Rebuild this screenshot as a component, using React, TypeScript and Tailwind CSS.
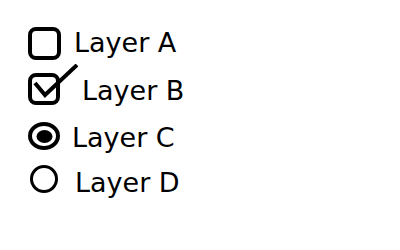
import React from 'react';

const font = { fontFamily: '"DejaVu Sans", Verdana, sans-serif' };

const Label = ({ text, className }: { text: string; className: string }) => (
  <span className={`text-[27px] leading-[27px] text-black whitespace-nowrap ${className}`} style={font}>
    {text}
  </span>
);

const App = () => {
  return (
    <div className="w-[400px] h-[250px] bg-white pt-[27px] pl-[28px] flex flex-col">
      {/* Layer A: empty checkbox */}
      <div className="flex items-start h-[37px]">
        <svg width="33" height="33" viewBox="0 0 33 33" className="shrink-0">
          <rect x="2" y="2" width="29" height="29" rx="6" fill="none" stroke="black" strokeWidth="4" />
        </svg>
        <Label text="Layer A" className="ml-[13px] mt-[2px]" />
      </div>

      {/* Layer B: checked checkbox */}
      <div className="flex items-start h-[42px]">
        <svg width="50" height="42" viewBox="0 0 50 42" className="shrink-0">
          <rect x="2" y="11" width="28" height="28" rx="6" fill="none" stroke="black" strokeWidth="4" />
          <path d="M7 19 L17 31 L49 1" fill="none" stroke="black" strokeWidth="4" strokeLinejoin="miter" />
        </svg>
        <Label text="Layer B" className="ml-[4px] mt-[13px]" />
      </div>

      {/* Layer C: selected radio */}
      <div className="flex items-start mt-[16px] h-[28px]">
        <svg width="32" height="28" viewBox="0 0 32 28" className="shrink-0">
          <ellipse cx="16" cy="14" rx="14" ry="12" fill="none" stroke="black" strokeWidth="4" />
          <ellipse cx="16.5" cy="14.5" rx="8" ry="6.5" fill="black" />
        </svg>
        <Label text="Layer C" className="ml-[12px] mt-[2px]" />
      </div>

      {/* Layer D: empty radio */}
      <div className="flex items-start mt-[15px] h-[28px] pl-[2px]">
        <svg width="28" height="28" viewBox="0 0 28 28" className="shrink-0">
          <circle cx="14" cy="14" r="12.5" fill="none" stroke="black" strokeWidth="3" />
        </svg>
        <Label text="Layer D" className="ml-[17px] mt-[4px]" />
      </div>
    </div>
  );
};

export default App;
